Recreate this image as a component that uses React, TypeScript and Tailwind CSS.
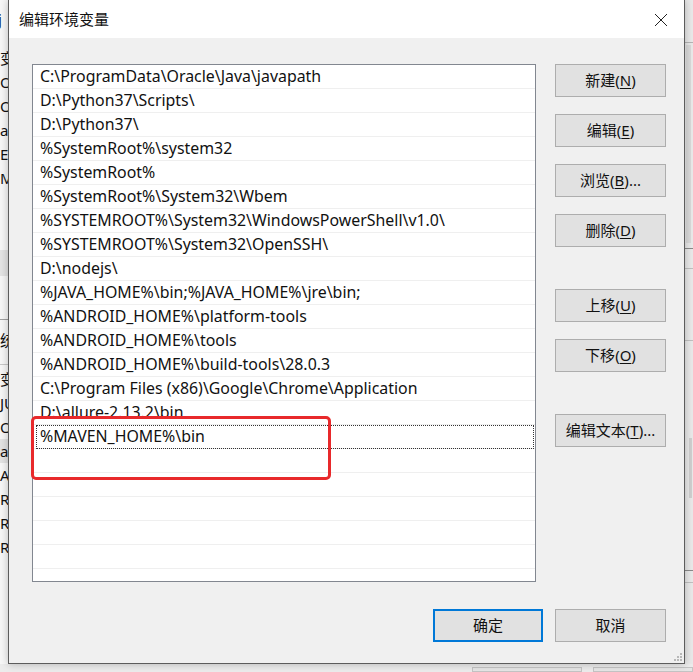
import React from "react";

const rows = [
  "C:\\ProgramData\\Oracle\\Java\\javapath",
  "D:\\Python37\\Scripts\\",
  "D:\\Python37\\",
  "%SystemRoot%\\system32",
  "%SystemRoot%",
  "%SystemRoot%\\System32\\Wbem",
  "%SYSTEMROOT%\\System32\\WindowsPowerShell\\v1.0\\",
  "%SYSTEMROOT%\\System32\\OpenSSH\\",
  "D:\\nodejs\\",
  "%JAVA_HOME%\\bin;%JAVA_HOME%\\jre\\bin;",
  "%ANDROID_HOME%\\platform-tools",
  "%ANDROID_HOME%\\tools",
  "%ANDROID_HOME%\\build-tools\\28.0.3",
  "C:\\Program Files (x86)\\Google\\Chrome\\Application",
  "D:\\allure-2.13.2\\bin",
  "%MAVEN_HOME%\\bin",
  "",
  "",
  "",
  "",
  "",
];

function Btn({ label, k, suffix, className = "" }: { label: string; k?: string; suffix?: string; className?: string }) {
  return (
    <div
      className={
        "w-[111px] h-[33px] shrink-0 flex items-center justify-center bg-[#e1e1e1] border border-[#adadad] text-[15px] text-[#111] " +
        className
      }
    >
      <span>
        {label}
        {k && (
          <>
            (<span className="underline underline-offset-2">{k}</span>){suffix}
          </>
        )}
      </span>
    </div>
  );
}

const topFrags = ["变", "Or", "Or", "a", "E", "M"];
const lowFrags = ["变", "JU", "OS", "a", "A", "R", "R", "R"];

function Frag({ s, hl = false }: { s: string; hl?: boolean }) {
  return (
    <div className={"h-[24px] shrink-0 flex items-center text-[15px] whitespace-nowrap " + (hl ? "bg-[#e3e3e3]" : "")}>{s}</div>
  );
}

export default function App() {
  return (
    <div className="relative w-[693px] h-[672px] overflow-hidden bg-[#ececec] font-['Noto_Sans','Noto_Sans_CJK_SC',sans-serif] text-[#111] flex flex-col">
      <div className="flex h-[664px] shrink-0">
        {/* background window on the left */}
        <div className="w-[8px] shrink-0 bg-[#f7f7f7] overflow-hidden flex flex-col">
          <div className="h-[38px] shrink-0 flex items-center text-[15px] -ml-[2px]">j</div>
          <div className="h-[8px] shrink-0" />
          {topFrags.map((s, i) => (
            <Frag key={i} s={s} />
          ))}
          <div className="h-[60px] shrink-0" />
          <div className="h-[26px] shrink-0 bg-[#e4e4e4]" />
          <div className="h-[44px] shrink-0 border-b border-[#a0a0a0]" />
          <div className="h-[8px] shrink-0" />
          <Frag s="统" />
          <div className="h-[13px] shrink-0 border-b border-[#c8c8c8]" />
          <div className="h-[2px] shrink-0" />
          {lowFrags.map((s, i) => (
            <Frag key={i} s={s} hl={i === 3} />
          ))}
        </div>

        {/* dialog */}
        <div className="relative w-[677px] shrink-0 border-x border-b border-[#5c5c5c] shadow-[0_0_8px_rgba(0,0,0,0.25)] flex flex-col bg-[#f0f0f0]">
          <div className="h-[38px] shrink-0 bg-white flex items-center justify-between pl-[10px] pr-[16px]">
            <span className="text-[15px] text-[#111] mt-[1px]">编辑环境变量</span>
            <svg width="14" height="14" viewBox="0 0 14 14" className="mt-[1px]">
              <path d="M1 1 L13 13 M13 1 L1 13" stroke="#222" strokeWidth="1" fill="none" />
            </svg>
          </div>
          <div className="flex pl-[23px] pt-[26px]">
            <div className="w-[504px] h-[518px] border border-[#828790] bg-white overflow-hidden flex flex-col">
              {rows.map((r, i) => (
                <div
                  key={i}
                  className="relative h-[24px] shrink-0 border-b border-[#efefef] pl-[7px] flex items-center text-[15.9px] whitespace-nowrap text-[#111]"
                >
                  {i === 15 && (
                    <div className="absolute left-[3px] right-[1px] top-0 bottom-[-1px] border border-dotted border-[#333]" />
                  )}
                  <span className="relative">{r}</span>
                </div>
              ))}
            </div>
            <div className="flex flex-col ml-[19px]">
              <Btn label="新建" k="N" />
              <Btn label="编辑" k="E" className="mt-[17px]" />
              <Btn label="浏览" k="B" suffix="..." className="mt-[17px]" />
              <Btn label="删除" k="D" className="mt-[17px]" />
              <Btn label="上移" k="U" className="mt-[42px]" />
              <Btn label="下移" k="O" className="mt-[17px]" />
              <Btn label="编辑文本" k="T" suffix="..." className="mt-[42px]" />
            </div>
          </div>
          <div className="flex justify-end pr-[18px] mt-[27px] gap-[12px]">
            <div className="w-[110px] h-[33px] flex items-center justify-center bg-[#e1e1e1] border-2 border-[#0078d7] text-[15px]">
              确定
            </div>
            <Btn label="取消" />
          </div>
          {/* resize grip */}
          <svg width="10" height="10" viewBox="0 0 10 10" className="absolute right-[1px] bottom-[1px]">
            {[[8, 2], [8, 5], [5, 5], [8, 8], [5, 8], [2, 8]].map(([x, y], i) => (
              <rect key={i} x={x - 1} y={y - 1} width="2" height="2" fill="#b8b8b8" />
            ))}
          </svg>
          {/* red highlight box (annotation over the list) */}
          <div className="absolute left-[22px] top-[416px] w-[300px] h-[64px] border-[3px] border-[#e8292b] rounded-[5px]" />
        </div>

        {/* background on the right */}
        <div className="flex-1 bg-[#e9e9e9] flex flex-col">
          <div className="h-[43px] shrink-0 border-b border-[#b5b5b5]" />
          <div className="h-[206px] shrink-0 border-b border-[#8a8a8a] pl-[1px] pt-[2px]">
            <div className="w-[5px] h-[198px] bg-[#dadada]" />
          </div>
          <div className="h-[20px] shrink-0 border-b border-[#c0c0c0]" />
          <div className="h-[72px] shrink-0 border-b border-[#c0c0c0]" />
          <div className="h-[97px] shrink-0" />
          <div className="h-[60px] shrink-0 ml-[4px] w-[3px] bg-[#cfcfcf]" />
          <div className="h-[73px] shrink-0 border-b border-[#8a8a8a]" />
          <div className="h-[12px] shrink-0 border-b border-[#c0c0c0]" />
        </div>
      </div>
      {/* background at the bottom */}
      <div className="flex-1 flex gap-[11px] pl-[472px] pt-[3px]">
        <div className="w-[110px] border border-[#c4c4c4] bg-[#e6e6e6]" />
        <div className="w-[100px] border border-[#c4c4c4] bg-[#e6e6e6]" />
      </div>
    </div>
  );
}
